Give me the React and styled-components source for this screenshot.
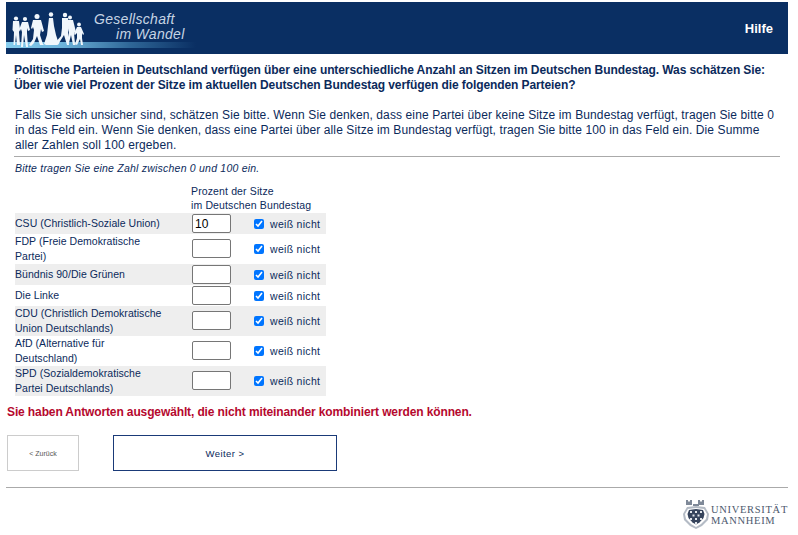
import React from "react";
import styled, { createGlobalStyle } from "styled-components";

const GlobalStyle = createGlobalStyle`
  html, body {
    margin: 0;
    padding: 0;
    background: #fff;
  }
  body {
    font-family: "Liberation Sans", Arial, sans-serif;
    font-size: 12px;
    color: #0b2a5b;
  }
`;

const Page = styled.div`
  width: 782px;
  margin-left: 6px;
  padding-top: 2px;
`;

const Header = styled.header`
  height: 52px;
  background: #0a2f63;
  display: flex;
  align-items: center;
  justify-content: space-between;
  position: relative;
  overflow: hidden;
`;

const Brand = styled.div`
  width: 190px;
  height: 52px;
  position: relative;
`;

const Glow = styled.div`
  position: absolute;
  left: 0;
  right: 0;
  bottom: 6px;
  height: 6px;
  background: linear-gradient(90deg, #86cdee 0%, #6db3da 30%, #2f6798 65%, #0a2f63 100%);
`;

const Figures = styled.svg`
  position: absolute;
  left: 2px;
  top: 6px;
  filter: blur(0.35px);
`;

const BrandText = styled.div`
  position: absolute;
  left: 88px;
  top: 10px;
  font-size: 14px;
  line-height: 15px;
  font-style: italic;
  color: #c6d4e4;
  letter-spacing: 0.3px;
`;

const BrandIndent = styled.div`
  padding-left: 22px;
`;

const HelpLink = styled.a`
  color: #fff;
  font-weight: bold;
  font-size: 13px;
  margin-right: 15px;
  margin-top: 1px;
`;

const Content = styled.main`
  padding: 9px 8px 0 8px;
`;

const Question = styled.div`
  font-weight: bold;
  line-height: 15px;
  letter-spacing: -0.09px;
  margin-bottom: 15px;
`;

const Hint = styled.div`
  line-height: 15px;
  letter-spacing: 0.11px;
  padding-left: 1px;
  padding-bottom: 3px;
  border-bottom: 1px solid #aaa;
`;

const Instruction = styled.div`
  font-style: italic;
  font-size: 10.5px;
  letter-spacing: 0.22px;
  line-height: 13px;
  padding: 5px 0 0 1px;
`;

const SeatTable = styled.table`
  border-collapse: collapse;
  margin: 8px 0 0 1px;
  width: 311px;
  font-size: 10.5px;
  letter-spacing: 0.13px;
  line-height: 14px;
`;

const HeadCell = styled.th`
  font-weight: normal;
  text-align: left;
  padding: 0;
  height: 30px;
  white-space: nowrap;
`;

const Row = styled.tr`
  background: ${({ $shaded }) => ($shaded ? "#eeeeee" : "#fff")};
`;

const PartyCell = styled.td`
  width: 176px;
  box-sizing: border-box;
  padding: 0 26px 0 0;
  line-height: 15px;
  letter-spacing: 0.04px;
  height: ${({ $tall }) => ($tall ? "30px" : "21px")};
`;

const InputCell = styled.td`
  width: 62px;
  box-sizing: border-box;
  padding: 0 0 0 1px;
`;

const SeatInput = styled.input`
  display: block;
  box-sizing: border-box;
  width: 39px;
  height: 19px;
  padding: 0 2px;
  margin-bottom: ${({ $tall }) => ($tall ? "1px" : "0")};
  border: 1px solid #767676;
  border-radius: 2px;
  font-family: "Liberation Sans", Arial, sans-serif;
  font-size: 12px;
  color: #000;
  background: #fff;
`;

const UnknownCell = styled.td`
  white-space: nowrap;
`;

const UnknownLabel = styled.label`
  display: flex;
  align-items: center;
  gap: 6px;
  font-size: 10.5px;
  letter-spacing: 0.3px;
`;

const UnknownBox = styled.input`
  margin: 0;
  width: 10px;
  height: 10px;
  accent-color: #0075ff;
`;

const ErrorText = styled.div`
  color: #b5082e;
  font-weight: bold;
  font-size: 12px;
  line-height: 14px;
  margin: 9px 0 0 -7px;
  letter-spacing: -0.12px;
`;

const Buttons = styled.div`
  display: flex;
  gap: 34px;
  margin: 16px 0 0 -7px;
`;

const NavButton = styled.button`
  box-sizing: border-box;
  height: 36px;
  width: ${({ $primary }) => ($primary ? "224px" : "72px")};
  background: #fff;
  border: ${({ $primary }) => ($primary ? "1px solid #1a3a78" : "1px solid #ccc")};
  color: ${({ $primary }) => ($primary ? "#0b2a5b" : "#555")};
  font-family: "Liberation Sans", Arial, sans-serif;
  font-size: ${({ $primary }) => ($primary ? "9.5px" : "7px")};
  letter-spacing: ${({ $primary }) => ($primary ? "0.45px" : "0")};
  padding: 0;
`;

const Footer = styled.footer`
  margin-top: 16px;
  border-top: 1px solid #aaa;
  height: 47px;
  box-sizing: border-box;
  display: flex;
  justify-content: flex-end;
  padding-top: 9px;
`;

const UniLogo = styled.div`
  display: flex;
  align-items: center;
  gap: 1px;
  height: 32px;
`;

const CrestSvg = styled.svg`
  filter: blur(0.3px);
`;

const UniName = styled.div`
  font-family: "Liberation Serif", "Times New Roman", serif;
  font-size: 10.5px;
  line-height: 11px;
  letter-spacing: 0.7px;
  color: #4d596d;
  margin-top: 4px;
`;

const parties = [
  { name: "CSU (Christlich-Soziale Union)", value: "10" },
  { name: "FDP (Freie Demokratische Partei)", tall: true },
  { name: "Bündnis 90/Die Grünen" },
  { name: "Die Linke" },
  { name: "CDU (Christlich Demokratische Union Deutschlands)", tall: true },
  { name: "AfD (Alternative für Deutschland)", tall: true },
  { name: "SPD (Sozialdemokratische Partei Deutschlands)", tall: true },
];

// the walking group in the banner, drawn left to right
const FamilyFigures = () => (
  <Figures width="80" height="44" viewBox="0 0 80 44" fill="#f0f6fb">
    <circle cx="8" cy="10.500" r="2.100" />
    <path d="M5 13h6l1 8-1 3 1 13H9l-1-10-1 10H5.500L6 24l-1.500-2z" />
    <circle cx="17" cy="11" r="2.100" />
    <path d="M14 14h6l2 8-2 1-1-3v5l1 14h-2l-2-12-1 12h-2l1-15-1-3-1 2-1-1z" />
    <circle cx="29" cy="8.500" r="2.500" />
    <path d="M25 12h8l3 11-2 1-1-3-1 6 3 9 1 1h-4l-3-9-3 7-3 3-2-1 4-6 1-9-1-3-1 2-1-1z" />
    <circle cx="43" cy="6.500" r="2.200" />
    <path d="M41 10h4l1 8 2 9 3 9-2 1H38l-2-1 3-9 1-9z" />
    <circle cx="57" cy="7" r="2.200" />
    <path d="M54 10h6l1 10-1 5 1 12h-2l-3-10-5 8-2 2-2-2 6-7 1-8z" />
    <circle cx="62" cy="9.500" r="2" />
    <path d="M60 12h5l2 8 1 4-2 1 1 11 1 1h-3l-2-10-2 8-2-1 2-10-1-6z" />
    <circle cx="71" cy="16.500" r="1.900" />
    <path d="M69 19h4l3 7-1 1-1-2v5l1 7h-2l-1-6-3 6-2-1 2-6v-5l-2 2-1-1z" />
  </Figures>
);

// university shield: two towers on a ring, checkered centre
const Crest = () => (
  <CrestSvg width="28" height="32" viewBox="0 0 28 32">
    <path
      d="M4 8V3h2v1.500h2V3h2v5zM16 8V3h2v1.500h2V3h2v5zM11 7h6v2h-6z"
      fill="#7f8998"
    />
    <path d="M14 9l9 1 4 7-1 6-6 6-6 3-6-3-6-6-1-6 4-7z" fill="#b4bbc5" />
    <path d="M14 11l8 1 3 5-1 5-5 5-5 3-5-3-5-5-1-5 3-5z" fill="#fff" />
    <path d="M14 12l7 1 1.500 4-1 4-4 4.500-3.500 2-3.500-2-4-4.500-1-4 1.500-4z" fill="#36445c" />
    <g fill="#e2e6eb">
      <rect x="8" y="14" width="2" height="2" />
      <rect x="13" y="14" width="2" height="2" />
      <rect x="18" y="14" width="2" height="2" />
      <rect x="10.500" y="17.500" width="2" height="2" />
      <rect x="15.500" y="17.500" width="2" height="2" />
      <rect x="8" y="21" width="2" height="2" />
      <rect x="13" y="21" width="2" height="2" />
      <rect x="18" y="21" width="2" height="2" />
      <rect x="13" y="25" width="2" height="2" />
    </g>
  </CrestSvg>
);

const App = () => (
  <Page>
    <GlobalStyle />
    <Header>
      <Brand>
        <Glow />
        <FamilyFigures />
        <BrandText>
          Gesellschaft
          <BrandIndent>im Wandel</BrandIndent>
        </BrandText>
      </Brand>
      <HelpLink>Hilfe</HelpLink>
    </Header>
    <Content>
      <Question>
        Politische Parteien in Deutschland verfügen über eine unterschiedliche Anzahl an Sitzen im
        Deutschen Bundestag. Was schätzen Sie:
        <br />
        Über wie viel Prozent der Sitze im aktuellen Deutschen Bundestag verfügen die folgenden
        Parteien?
      </Question>
      <Hint>
        Falls Sie sich unsicher sind, schätzen Sie bitte. Wenn Sie denken, dass eine Partei über
        keine Sitze im Bundestag verfügt, tragen Sie bitte 0 in das Feld ein. Wenn Sie denken, dass
        eine Partei über alle Sitze im Bundestag verfügt, tragen Sie bitte 100 in das Feld ein. Die
        Summe aller Zahlen soll 100 ergeben.
      </Hint>
      <Instruction>Bitte tragen Sie eine Zahl zwischen 0 und 100 ein.</Instruction>
      <SeatTable>
        <thead>
          <tr>
            <HeadCell />
            <HeadCell colSpan={2}>
              Prozent der Sitze
              <br />
              im Deutschen Bundestag
            </HeadCell>
          </tr>
        </thead>
        <tbody>
          {parties.map((party, i) => (
            <Row key={party.name} $shaded={i % 2 === 0}>
              <PartyCell $tall={party.tall}>{party.name}</PartyCell>
              <InputCell>
                <SeatInput type="text" $tall={party.tall} defaultValue={party.value || ""} />
              </InputCell>
              <UnknownCell>
                <UnknownLabel>
                  <UnknownBox type="checkbox" defaultChecked />
                  weiß nicht
                </UnknownLabel>
              </UnknownCell>
            </Row>
          ))}
        </tbody>
      </SeatTable>
      <ErrorText>Sie haben Antworten ausgewählt, die nicht miteinander kombiniert werden können.</ErrorText>
      <Buttons>
        <NavButton>&lt; Zurück</NavButton>
        <NavButton $primary>Weiter &gt;</NavButton>
      </Buttons>
    </Content>
    <Footer>
      <UniLogo>
        <Crest />
        <UniName>
          UNIVERSITÄT
          <br />
          MANNHEIM
        </UniName>
      </UniLogo>
    </Footer>
  </Page>
);

export default App;
